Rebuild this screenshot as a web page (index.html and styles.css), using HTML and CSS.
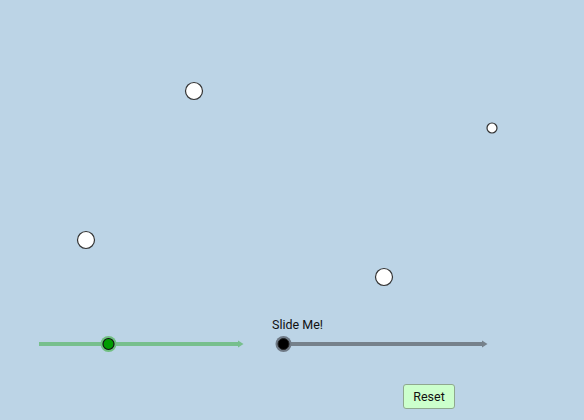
FILE: index.html
```html
<!DOCTYPE html>
<html>
<head>
<meta charset="utf-8">
<link rel="stylesheet" href="styles.css">
</head>
<body>
<div class="applet">
  <svg class="board" width="584" height="420" viewBox="0 0 584 420">
    <g class="pt">
      <circle cx="194" cy="91" r="8.5"/>
      <circle cx="492" cy="128" r="5"/>
      <circle cx="86" cy="240" r="8.5"/>
      <circle cx="384" cy="277" r="8.5"/>
    </g>
    <g class="slider-green">
      <line x1="39" y1="344" x2="239" y2="344"/>
      <polygon points="238,340.5 243.5,344 238,347.5"/>
      <circle class="halo" cx="108.5" cy="344" r="8"/>
      <circle class="knob" cx="108.5" cy="344" r="5.5"/>
    </g>
    <g class="slider-gray">
      <line x1="284" y1="344" x2="483" y2="344"/>
      <polygon points="482,340.5 487.5,344 482,347.5"/>
      <circle class="halo" cx="283.5" cy="344" r="8"/>
      <circle class="knob" cx="283.5" cy="344" r="5.5"/>
    </g>
    <text class="label" x="272" y="329">Slide Me!</text>
  </svg>
  <button class="reset">Reset</button>
</div>
</body>
</html>
```
FILE: styles.css
```css
html, body {
  margin: 0;
  padding: 0;
  background: #bcd4e6;
}
.applet {
  position: relative;
  width: 584px;
  height: 420px;
  overflow: hidden;
  background: #bcd4e6;
  font-family: Roboto, "Liberation Sans", sans-serif;
}
.board {
  display: block;
}
.pt circle {
  fill: #ffffff;
  stroke: #333333;
  stroke-width: 1.2;
}
.slider-green line {
  stroke: #77bf8d;
  stroke-width: 4;
  stroke-linecap: butt;
}
.slider-green polygon {
  fill: #77bf8d;
}
.slider-green .halo {
  fill: #6fbf80;
}
.slider-green .knob {
  fill: #009c00;
  stroke: #111111;
  stroke-width: 1.2;
}
.slider-gray line {
  stroke: #76818b;
  stroke-width: 4;
}
.slider-gray polygon {
  fill: #76818b;
}
.slider-gray .halo {
  fill: #6f7a86;
}
.slider-gray .knob {
  fill: #000000;
  stroke: #222222;
  stroke-width: 1;
}
.label {
  font-family: Roboto, "Liberation Sans", sans-serif;
  font-size: 12.5px;
  fill: #111111;
}
.reset {
  position: absolute;
  left: 403px;
  top: 384px;
  width: 52px;
  height: 25px;
  margin: 0;
  padding: 0;
  box-sizing: border-box;
  background: #ccffcc;
  border: 1px solid #8fa88f;
  border-radius: 3px;
  font-family: Roboto, "Liberation Sans", sans-serif;
  font-size: 12.5px;
  color: #111111;
}
```
